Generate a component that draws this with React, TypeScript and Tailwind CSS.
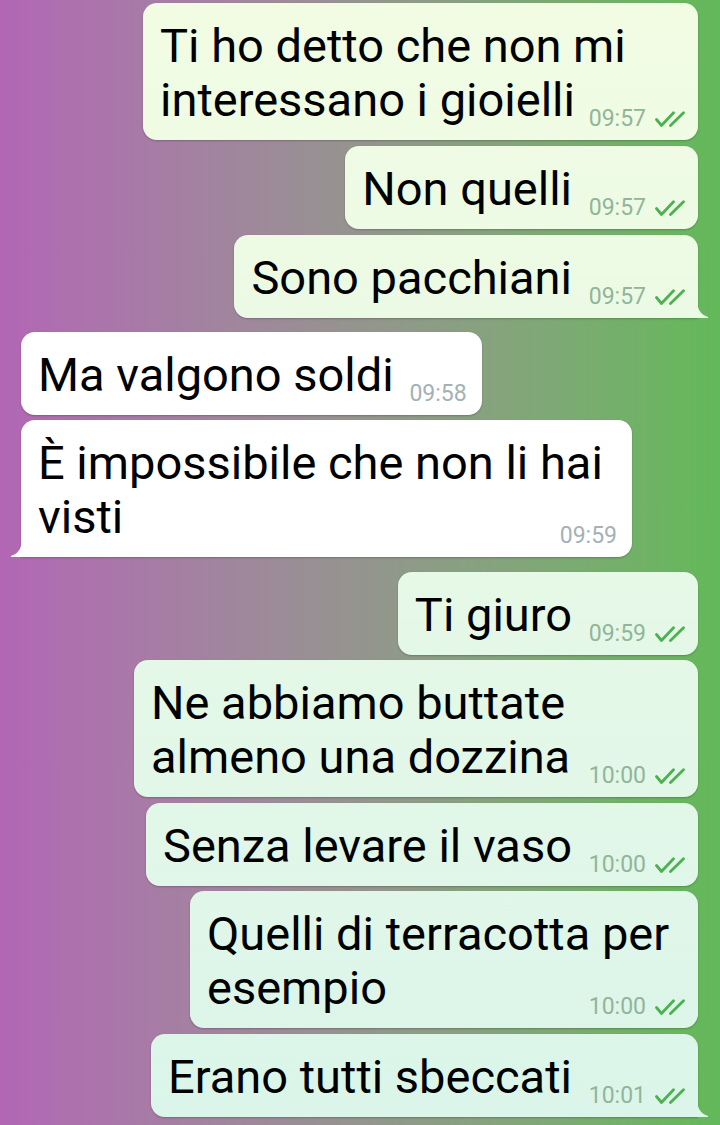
import React from 'react';

type Msg = {
  id: number;
  lines: string[];
  time: string;
  out: boolean;
  tail?: boolean;
  gap: string;
  width?: string;
  tailFill?: string;
};

const messages: Msg[] = [
  { id: 1, lines: ['Ti ho detto che non mi', 'interessano i gioielli'], time: '09:57', out: true, gap: 'mt-[3px]', width: 'w-[555px]' },
  { id: 2, lines: ['Non quelli'], time: '09:57', out: true, gap: 'mt-[6px]' },
  { id: 3, lines: ['Sono pacchiani'], time: '09:57', out: true, gap: 'mt-[6px]', tail: true, tailFill: 'fill-[#ecfae4]' },
  { id: 4, lines: ['Ma valgono soldi'], time: '09:58', out: false, gap: 'mt-[14px]' },
  { id: 5, lines: ['È impossibile che non li hai', 'visti'], time: '09:59', out: false, gap: 'mt-[5px]', width: 'w-[611px]', tail: true },
  { id: 6, lines: ['Ti giuro'], time: '09:59', out: true, gap: 'mt-[15px]' },
  { id: 7, lines: ['Ne abbiamo buttate', 'almeno una dozzina'], time: '10:00', out: true, gap: 'mt-[5px]', width: 'w-[564px]' },
  { id: 8, lines: ['Senza levare il vaso'], time: '10:00', out: true, gap: 'mt-[6px]' },
  { id: 9, lines: ['Quelli di terracotta per', 'esempio'], time: '10:00', out: true, gap: 'mt-[5px]', width: 'w-[508px]' },
  { id: 10, lines: ['Erano tutti sbeccati'], time: '10:01', out: true, gap: 'mt-[6px]', tail: true, tailFill: 'fill-[#ddf6e8]' },
];

const DoubleCheck: React.FC = () => (
  <svg width="33" height="16" viewBox="0 0 33 16" fill="none" className="stroke-[#4db152]">
    <path d="M2.5 8.5 L7.5 14.5 L19.5 1.8" strokeWidth="2.8" strokeLinecap="round" strokeLinejoin="round" />
    <path d="M16.5 14.5 L29.5 1.8" strokeWidth="2.8" strokeLinecap="round" />
  </svg>
);

const Lines: React.FC<{ msg: Msg; spacer: string }> = ({ msg, spacer }) => (
  <>
    {msg.lines.map((line, i) => {
      const last = i === msg.lines.length - 1;
      return (
        <div key={i} className="flex whitespace-nowrap">
          <span>{line}</span>
          {last && !msg.width && <span className={`inline-block shrink-0 ${spacer}`} />}
        </div>
      );
    })}
  </>
);

const Bubble: React.FC<{ msg: Msg }> = ({ msg }) => {
  const base =
    'relative h-fit text-[47px] leading-[54px] text-black pt-[16px] pb-[13px] pl-[17px] shadow-[0_1px_2px_rgba(0,0,0,0.22)]';
  if (msg.out) {
    return (
      <div className={`flex justify-end pr-[22px] ${msg.gap}`}>
        <div
          className={`${base} pr-[11px] bg-fixed bg-linear-to-b from-[#f2fce3] to-[#dbf5ea] rounded-[14px] ${msg.tail ? 'rounded-br-none' : ''} ${msg.width ?? 'w-fit'}`}
        >
          <Lines msg={msg} spacer="w-[115px]" />
          <div className="absolute right-[11px] bottom-[10px] flex items-end gap-[8px] text-[23px] leading-[22px] text-[#91b59a]">
            <span>{msg.time}</span>
            <span className="mb-[3px]">
              <DoubleCheck />
            </span>
          </div>
          {msg.tail && (
            <svg className={`absolute bottom-0 right-[-11px] ${msg.tailFill}`} width="12" height="18" viewBox="0 0 12 18">
              <path d="M0 0 C0.5 9 3 14 10 16.5 C11.5 17 11.5 18 10.5 18 L0 18 Z" />
            </svg>
          )}
        </div>
      </div>
    );
  }
  return (
    <div className={`flex justify-start pl-[21px] ${msg.gap}`}>
      <div className={`${base} pr-[15px] bg-white rounded-[14px] ${msg.tail ? 'rounded-bl-none' : ''} ${msg.width ?? 'w-fit'}`}>
        <Lines msg={msg} spacer="w-[73px]" />
        <div className="absolute right-[15px] bottom-[10px] text-[23px] leading-[22px] text-[#a3b2b5]">{msg.time}</div>
        {msg.tail && (
          <svg className="absolute bottom-0 left-[-11px] fill-white" width="12" height="18" viewBox="0 0 12 18">
            <path d="M12 0 C11.5 9 9 14 2 16.5 C0.5 17 0.5 18 1.5 18 L12 18 Z" />
          </svg>
        )}
      </div>
    </div>
  );
};

export default function App() {
  return (
    <div className="w-full h-[1125px] overflow-hidden bg-linear-to-r from-[#b266b5] to-[#62b958] font-['Roboto',sans-serif]">
      {messages.map((m) => (
        <Bubble key={m.id} msg={m} />
      ))}
    </div>
  );
}
